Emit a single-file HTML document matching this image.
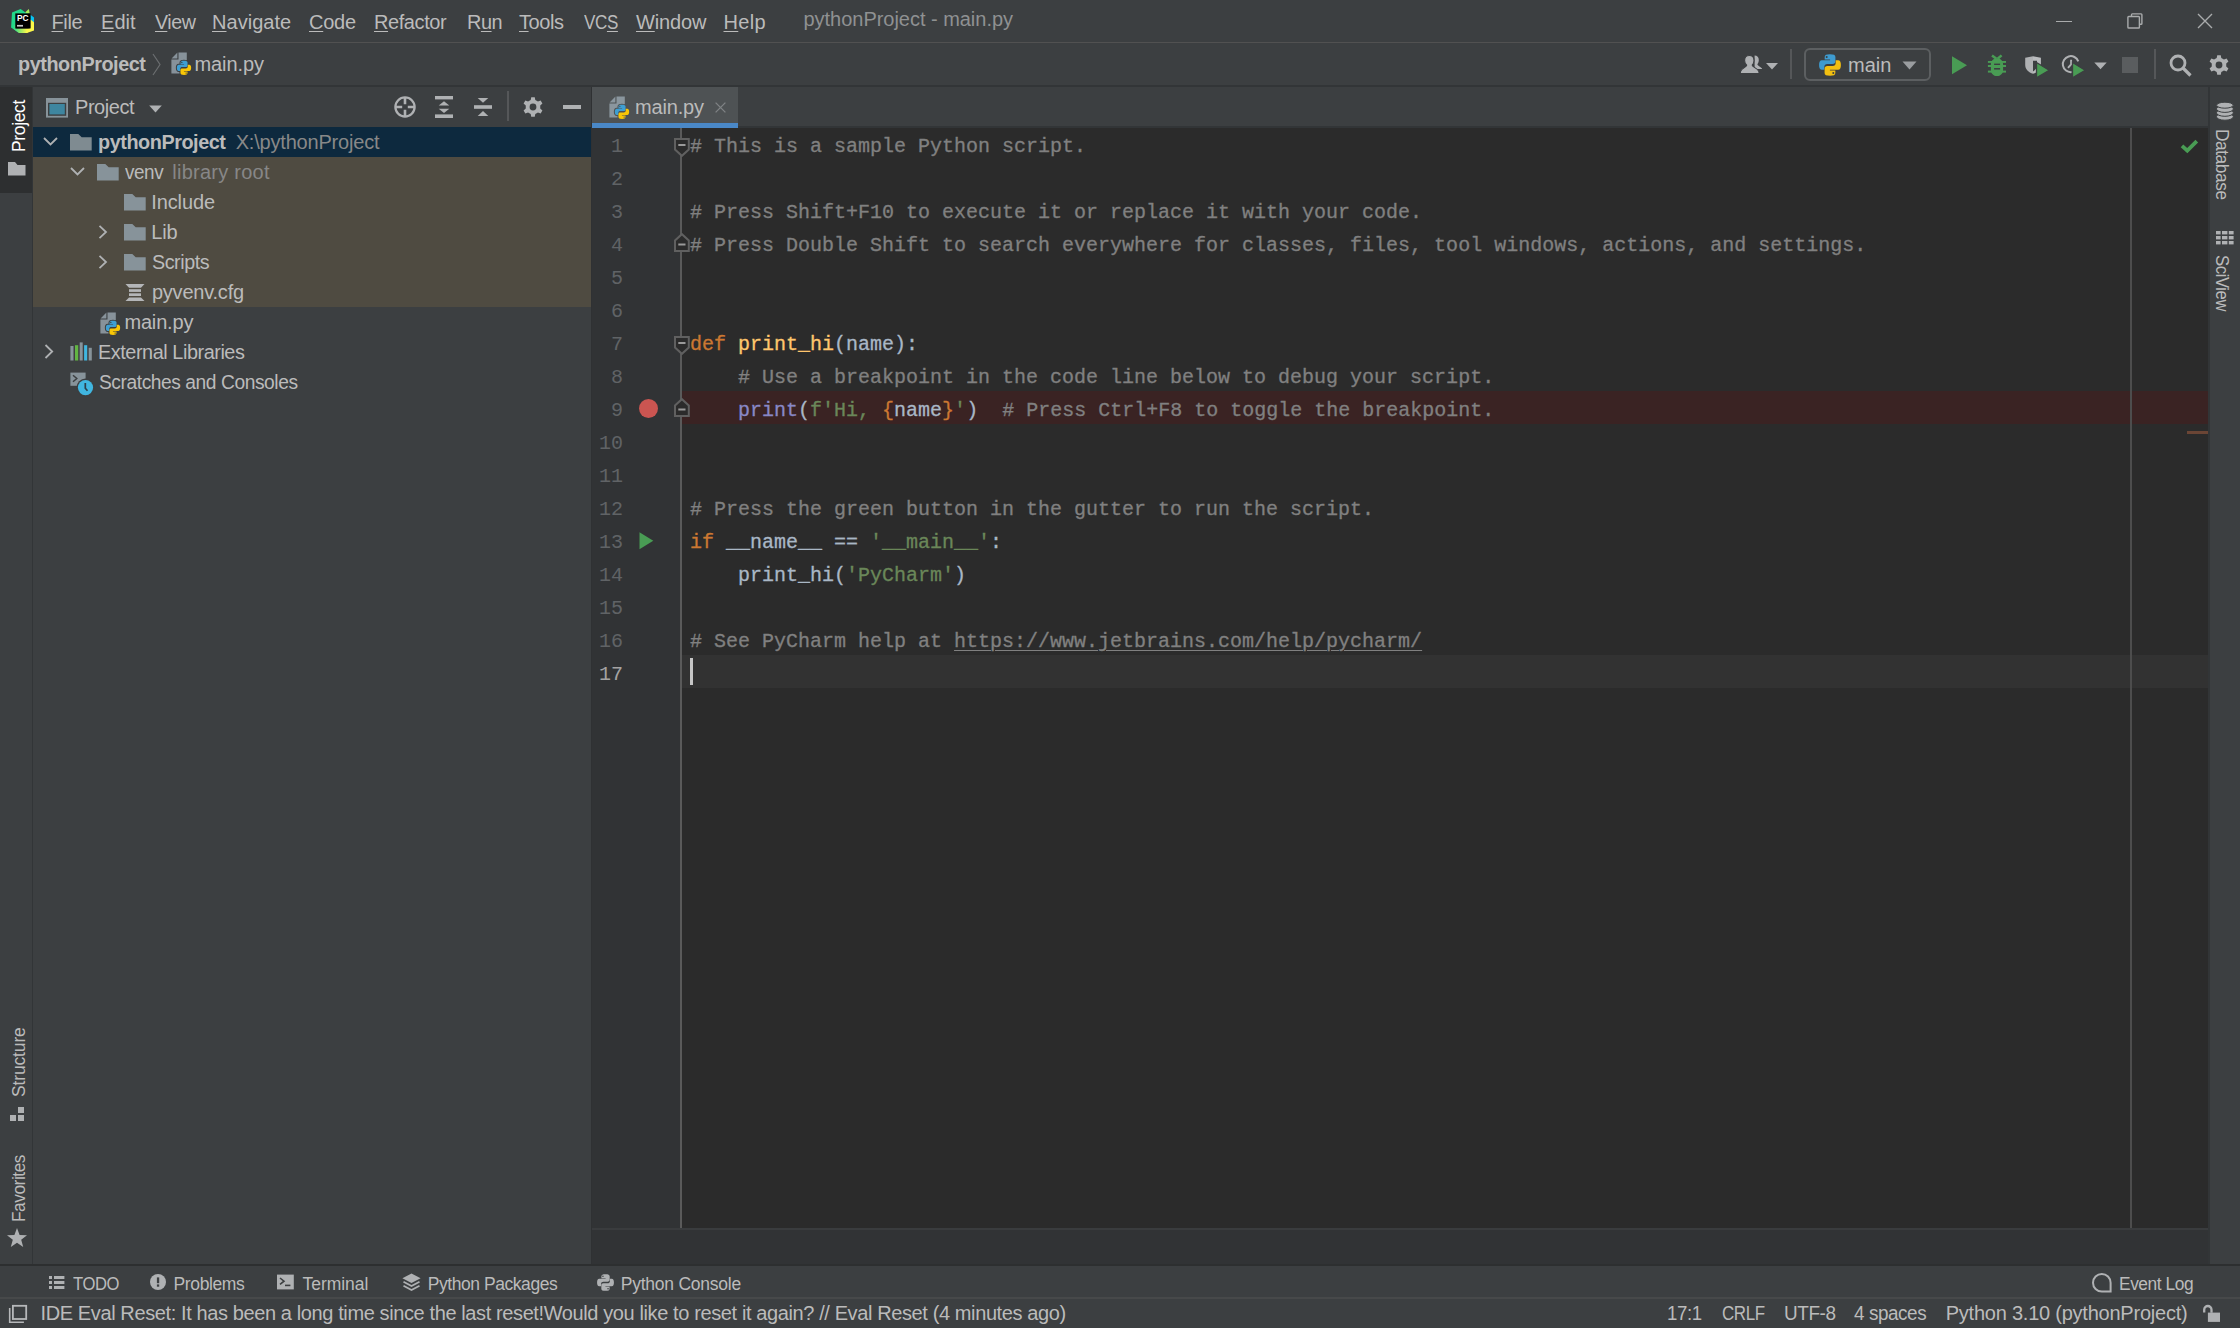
<!DOCTYPE html>
<html lang="en">
<head>
<meta charset="utf-8">
<title>pythonProject - main.py</title>
<style>
*{box-sizing:border-box;margin:0;padding:0}
html,body{width:2240px;height:1328px;overflow:hidden;background:#3c3f41}
body{position:relative;font-family:"Liberation Sans",sans-serif;font-size:20px;color:#bbbbbb;-webkit-font-smoothing:antialiased}
.a{position:absolute}
.t{position:absolute;white-space:pre;line-height:30px;height:30px}
.b{font-weight:bold}
.dim{color:#878787}
u{text-decoration:underline;text-decoration-thickness:1px;text-underline-offset:1.500px}
svg{position:absolute;overflow:visible}
/* editor */
#ed{position:absolute;left:592px;top:127px;width:1616px;height:1101px;background:#2b2b2b;overflow:hidden}
#gut{position:absolute;left:0;top:0;width:88px;height:1101px;background:#313335}
#gsep{position:absolute;left:88px;top:0;width:2px;height:1101px;background:#5a5a5a}
#margin{position:absolute;left:1538px;top:1px;width:2px;height:1100px;background:#4d4d4d}
.ln{position:absolute;left:0;width:31px;text-align:right;font-family:"Liberation Mono",monospace;font-size:20px;line-height:33px;height:33px;color:#606366;white-space:pre}
.cl{position:absolute;left:98px;font-family:"Liberation Mono",monospace;font-size:20px;line-height:33px;height:33px;color:#a9b7c6;white-space:pre;-webkit-text-stroke:.3px}
.c{color:#808080}.k{color:#cc7832}.s{color:#6a8759}.f{color:#ffc66d}.bi{color:#8888c6}
.lnk{text-decoration:underline;text-decoration-thickness:1px;text-underline-offset:3px}
/*FIT*/
#m1{left:51.50px;letter-spacing:-0.368px}
#m2{left:101.00px;letter-spacing:0.031px}
#m3{left:154.50px;letter-spacing:-0.450px;transform-origin:0 0;transform:scaleX(0.9835)}
#m4{left:212.00px;letter-spacing:0.027px}
#m5{left:309.00px;letter-spacing:-0.230px}
#m6{left:374.00px;letter-spacing:-0.418px}
#m7{left:466.50px;letter-spacing:-0.450px;transform-origin:0 0;transform:scaleX(0.9951)}
#m8{left:519.00px;letter-spacing:-0.422px}
#m9{left:584.00px;letter-spacing:-0.450px;transform-origin:0 0;transform:scaleX(0.8525)}
#m10{left:636.00px;letter-spacing:-0.138px}
#m11{left:723.50px;letter-spacing:0.330px}
#ttl{left:803.50px;letter-spacing:-0.027px}
#n1{left:17.76px;letter-spacing:-0.450px;transform-origin:0 0;transform:scaleX(0.9911)}
#n2{left:194.50px;letter-spacing:-0.088px}
#n3{left:1848.00px;letter-spacing:0.024px}
#p0{left:75.00px;letter-spacing:-0.448px}
#r0a{left:97.71px;letter-spacing:-0.450px;transform-origin:0 0;transform:scaleX(0.9915)}
#r0b{left:235.70px;letter-spacing:-0.193px}
#r1a{left:125.40px;letter-spacing:-0.450px;transform-origin:0 0;transform:scaleX(0.9439)}
#r1b{left:172.30px;letter-spacing:0.253px}
#r2{left:151.20px;letter-spacing:-0.095px}
#r3{left:151.20px;letter-spacing:-0.133px}
#r4{left:152.20px;letter-spacing:-0.450px;transform-origin:0 0;transform:scaleX(0.9859)}
#r5{left:151.90px;letter-spacing:-0.211px}
#r6{left:124.40px;letter-spacing:-0.155px}
#r7{left:97.71px;letter-spacing:-0.450px;transform-origin:0 0;transform:scaleX(0.9927)}
#r8{left:98.70px;letter-spacing:-0.450px;transform-origin:0 0;transform:scaleX(0.9598)}
#tb{left:635.00px;letter-spacing:-0.172px}
#b1{left:72.60px;letter-spacing:-0.450px;transform-origin:0 0;transform:scaleX(0.9488)}
#b2{left:173.60px;letter-spacing:-0.395px}
#b3{left:302.50px;letter-spacing:-0.034px}
#b4{left:427.80px;letter-spacing:-0.450px}
#b5{left:620.70px;letter-spacing:-0.232px}
#b6{left:2118.51px;letter-spacing:-0.450px;transform-origin:0 0;transform:scaleX(0.9921)}
#s1{left:40.50px;letter-spacing:-0.389px}
#s2{left:1667.07px;letter-spacing:-0.450px;transform-origin:0 0;transform:scaleX(0.9327)}
#s3{left:1721.65px;letter-spacing:-0.450px;transform-origin:0 0;transform:scaleX(0.8478)}
#s4{left:1783.75px;letter-spacing:-0.450px;transform-origin:0 0;transform:scaleX(0.9472)}
#s5{left:1854.00px;letter-spacing:-0.450px;transform-origin:0 0;transform:scaleX(0.9441)}
#s6{left:1945.70px;letter-spacing:-0.229px}
#v1{left:4.00px;top:152.20px;letter-spacing:-0.351px;transform-origin:0 0;transform:rotate(-90deg) scaleX(1.0000)}
#v2{left:3.80px;top:1096.80px;letter-spacing:-0.146px;transform-origin:0 0;transform:rotate(-90deg) scaleX(1.0000)}
#v3{left:3.80px;top:1221.99px;letter-spacing:-0.450px;transform-origin:0 0;transform:rotate(-90deg) scaleX(0.9865)}
#v4{left:2237.00px;top:128.71px;letter-spacing:-0.450px;transform-origin:0 0;transform:rotate(90deg) scaleX(0.9896)}
#v5{left:2237.00px;top:254.70px;letter-spacing:-0.450px;transform-origin:0 0;transform:rotate(90deg) scaleX(0.9549)}
/*ENDFIT*/
</style>
</head>
<body>
<!-- ===== frame lines ===== -->
<div class="a" style="left:0;top:42px;width:2240px;height:1px;background:#515151"></div>
<div class="a" style="left:0;top:85px;width:2240px;height:2px;background:#323537"></div>
<!-- left stripe -->
<div class="a" id="lstripe" style="left:0;top:87px;width:32px;height:1177px;background:#3c3f41"></div>
<div class="a" style="left:32px;top:87px;width:1px;height:1177px;background:#323537"></div>
<div class="a" id="projbtn" style="left:0;top:87px;width:32px;height:106px;background:#2d2f30"></div>
<!-- right stripe -->
<div class="a" style="left:2208px;top:87px;width:2px;height:1177px;background:#323537"></div>
<!-- sidebar / editor splitter -->
<div class="a" style="left:591px;top:87px;width:1px;height:1177px;background:#2f3133"></div>
<!-- bottom lines -->
<div class="a" style="left:0;top:1264px;width:2240px;height:2px;background:#2d2f30"></div>
<div class="a" style="left:0;top:1297px;width:2240px;height:2px;background:#47494a"></div>

<!-- ===== menu bar ===== -->
<svg id="logo" style="left:0;top:0" width="40" height="40" viewBox="0 0 40 40">
  <linearGradient id="lg1" x1="13" y1="0" x2="27" y2="0" gradientUnits="userSpaceOnUse"><stop offset="0" stop-color="#21d789"/><stop offset="1" stop-color="#fcf84a"/></linearGradient>
  <polygon points="12,12.600 20.600,9 25.200,12.200 28,13.400 28,28 16,28 18.900,33 11.100,27.200" fill="#21d789"/>
  <polygon points="25.200,12.200 28.900,8.900 29.700,13.400 27,13.400" fill="#a6ee5a"/>
  <polygon points="30.400,14.800 34,17.500 34,22.400 30.400,20.600" fill="#07c3f2"/>
  <polygon points="30.400,19.400 34,22.300 34,30.600 26.900,33 22,32 30.400,27.800" fill="#fcf84a"/>
  <polygon points="11.100,27.200 15.400,24 15.400,28.400 30.400,28.400 30.400,30 26.900,33 18.900,33" fill="url(#lg1)"/>
  <rect x="15.300" y="13.400" width="15.200" height="15.100" fill="#000"/>
  <rect x="17" y="24.900" width="6" height="1.700" fill="#c8c8c8"/>
  <text x="16.900" y="21.400" font-family="Liberation Sans, sans-serif" font-weight="bold" font-size="9.600" fill="#fff" textLength="11.600" lengthAdjust="spacingAndGlyphs">PC</text>
</svg>
<span class="t" id="m1" style="top:7px"><u>F</u>ile</span>
<span class="t" id="m2" style="top:7px"><u>E</u>dit</span>
<span class="t" id="m3" style="top:7px"><u>V</u>iew</span>
<span class="t" id="m4" style="top:7px"><u>N</u>avigate</span>
<span class="t" id="m5" style="top:7px"><u>C</u>ode</span>
<span class="t" id="m6" style="top:7px"><u>R</u>efactor</span>
<span class="t" id="m7" style="top:7px">R<u>u</u>n</span>
<span class="t" id="m8" style="top:7px"><u>T</u>ools</span>
<span class="t" id="m9" style="top:7px">VC<u>S</u></span>
<span class="t" id="m10" style="top:7px"><u>W</u>indow</span>
<span class="t" id="m11" style="top:7px"><u>H</u>elp</span>
<span class="t" id="ttl" style="top:4px;color:#8f9192">pythonProject - main.py</span>
<!-- window controls -->
<div class="a" style="left:2056px;top:20.700px;width:16px;height:1.600px;background:#a9abac"></div>
<svg style="left:2127px;top:13px" width="16" height="16" viewBox="0 0 16 16" fill="none" stroke="#a9abac" stroke-width="1.400">
  <rect x=".9" y="3.500" width="11.500" height="11.500" rx=".8"/>
  <path d="M4.500 3.500V1.700a.8.800 0 0 1 .8-.800h8.800a.8.800 0 0 1 .8.800v8.800a.8.800 0 0 1-.8.800h-1.700"/>
</svg>
<svg style="left:2197px;top:13px" width="16" height="16" viewBox="0 0 16 16" fill="none" stroke="#a9abac" stroke-width="1.400">
  <path d="M1 1L15 15M15 1L1 15"/>
</svg>

<!-- ===== navigation bar ===== -->
<span class="t b" id="n1" style="top:49px">pythonProject</span>
<svg style="left:152px;top:53px" width="10" height="23" viewBox="0 0 10 23" fill="none" stroke="#6b6e70" stroke-width="1.2"><path d="M1 1L8 11.5L1 22"/></svg>
<!-- python file icon -->
<svg style="left:171px;top:52px" width="21" height="24" viewBox="0 0 21 24">
  <path d="M7.500 .4H15.800V21.400H.4V7.500H7.500Z" fill="#9aa7b0" fill-opacity=".8"/><path d="M6.400 .6V6.400H.6Z" fill="#9aa7b0" fill-opacity=".8"/>
  <g transform="translate(5.800 8.600) scale(.6)">
    <path d="M11.9 .2C8 .2 6.2 1 6.2 3.2V6h5.9v.8H3.2C1 6.8.1 9 .1 12s.9 5.2 3.1 5.2h2.6v-3.1c0-2.200 1.200-3.300 3.300-3.300h5.800c1.900 0 3-1.100 3-3V3.200c0-2.200-1.800-3-6-3z" fill="#3c3f41" stroke="#3c3f41" stroke-width="3.400"/><path transform="rotate(180 12 12)" d="M11.9 .2C8 .2 6.2 1 6.2 3.2V6h5.9v.8H3.2C1 6.8.1 9 .1 12s.9 5.2 3.1 5.2h2.6v-3.1c0-2.200 1.200-3.300 3.300-3.300h5.800c1.900 0 3-1.100 3-3V3.200c0-2.200-1.800-3-6-3z" fill="#3c3f41" stroke="#3c3f41" stroke-width="3.400"/>
    <path d="M11.9 .2C8 .2 6.2 1 6.2 3.2V6h5.9v.8H3.2C1 6.8.1 9 .1 12s.9 5.2 3.1 5.2h2.6v-3.1c0-2.200 1.200-3.300 3.300-3.300h5.800c1.900 0 3-1.100 3-3V3.200c0-2.200-1.800-3-6-3zM8.400 2.100a1.100 1.100 0 1 1 0 2.200 1.100 1.100 0 0 1 0-2.200z" fill="#3e9fd3" fill-rule="evenodd"/><path transform="rotate(180 12 12)" d="M11.9 .2C8 .2 6.2 1 6.2 3.2V6h5.9v.8H3.2C1 6.8.1 9 .1 12s.9 5.2 3.1 5.2h2.6v-3.1c0-2.200 1.200-3.300 3.300-3.300h5.800c1.900 0 3-1.100 3-3V3.200c0-2.200-1.800-3-6-3zM8.400 2.100a1.100 1.100 0 1 1 0 2.200 1.100 1.100 0 0 1 0-2.200z" fill="#f8c606" fill-rule="evenodd"/>
  </g>
</svg>
<span class="t" id="n2" style="top:49px">main.py</span>
<!-- users icon -->
<svg style="left:1740px;top:55px" width="40" height="20" viewBox="0 0 40 20">
  <path d="M14.600 .600c2.600 0 4.200 1.800 4.200 4.400 0 1.800-.700 3.300-1.500 4.200.300 1.400 3 2.400 4.700 4.400v.4h-7.400z" fill="#afb1b3"/>
  <path d="M9.300 .500c2.900 0 4.700 2 4.700 4.900 0 2-.800 3.700-1.800 4.800.200 2.100 5.400 2.800 6.600 6.200l.400 2.200H.2l.4-2.200C1.800 13 6.400 12.300 6.700 10.200 5.600 9.100 4.600 7.400 4.600 5.400 4.600 2.500 6.400.500 9.300.500z" fill="#afb1b3" stroke="#3c3f41" stroke-width="1.100"/>
  <path d="M26 8h12l-6 6.500z" fill="#afb1b3"/>
</svg>
<div class="a" style="left:1790px;top:49px;width:2px;height:30px;background:#555759"></div>
<!-- run configuration box -->
<div class="a" style="left:1804px;top:48px;width:127px;height:33px;border:2px solid #5c5f61;border-radius:6px"></div>
<svg style="left:1819px;top:54px" width="22" height="22" viewBox="0 0 24 24">
  <path d="M11.9 .2C8 .2 6.2 1 6.2 3.2V6h5.9v.8H3.2C1 6.8.1 9 .1 12s.9 5.2 3.1 5.2h2.600v-3.100c0-2.200 1.200-3.300 3.300-3.300h5.800c1.900 0 3-1.100 3-3V3.200c0-2.200-1.800-3-6-3zM8.400 2.100a1.100 1.100 0 1 1 0 2.200 1.100 1.100 0 0 1 0-2.200z" fill="#3e9bd0"/>
  <path transform="rotate(180 12 12)" d="M11.9 .2C8 .2 6.2 1 6.2 3.2V6h5.900v.8H3.200C1 6.800.1 9 .1 12s.9 5.200 3.100 5.200h2.600v-3.100c0-2.200 1.200-3.300 3.300-3.300h5.800c1.900 0 3-1.100 3-3V3.200c0-2.200-1.800-3-6-3zM8.400 2.100a1.100 1.100 0 1 1 0 2.200 1.100 1.100 0 0 1 0-2.200z" fill="#f2bf10"/>
</svg>
<span class="t" id="n3" style="top:50px">main</span>
<svg style="left:1902px;top:61px" width="15" height="9" viewBox="0 0 15 9"><path d="M.5 .5h14L7.500 8.500z" fill="#9a9da0"/></svg>
<!-- run -->
<svg style="left:1951px;top:56px" width="17" height="19" viewBox="0 0 17 19"><path d="M1 .3L16 9.300L1 18.300z" fill="#499c54"/></svg>
<!-- debug bug -->
<svg style="left:1987px;top:54px" width="20" height="23" viewBox="0 0 20 23" fill="#499c54">
  <path d="M5 1.400L9.400 4.800M14.600 1.400L10.600 4.800" stroke="#499c54" stroke-width="2.500" fill="none"/>
  <path d="M10 4.300c3.500 0 6.100 2.600 6.100 6.100v5.500c0 3.500-2.600 6.100-6.100 6.100s-6.100-2.600-6.100-6.100v-5.500c0-3.500 2.600-6.100 6.100-6.100z"/>
  <rect x=".9" y="7" width="18.100" height="1.900"/><rect x=".9" y="11" width="18.100" height="2"/><rect x=".9" y="16.600" width="18.100" height="2"/>
  <rect x="7.100" y="9.600" width="6" height="1.400" fill="#3c3f41"/><rect x="7.100" y="14" width="6" height="1.600" fill="#3c3f41"/>
</svg>
<!-- coverage -->
<svg style="left:2024px;top:55px" width="25" height="23" viewBox="0 0 25 23">
  <path d="M9 1.200L1.200 2.800V10C1.200 14.500 4.500 17.300 9 18.800Z" fill="#afb1b3"/>
  <path fill-rule="evenodd" d="M9 1.200L16.900 2.800V10C16.900 14.500 13.500 17.300 9 18.800ZM9 5.800H13V10C13 13 11.500 15 9 16.400Z" fill="#b9bbbd"/>
  <path d="M12.500 7.500L25.200 15.200L12.500 22.900z" fill="#499c54" stroke="#3c3f41" stroke-width="1.300"/>
</svg>
<!-- profile -->
<svg style="left:2060px;top:55px" width="25" height="23" viewBox="0 0 25 23">
  <path d="M18.300 6.300A8 8 0 1 0 11.600 17.100" fill="none" stroke="#afb1b3" stroke-width="2"/>
  <path d="M11.100 4.800v4.600l-3.100 3.400" fill="none" stroke="#afb1b3" stroke-width="1.900"/>
  <path d="M12.500 7.500L25.200 15.200L12.500 22.900z" fill="#499c54" stroke="#3c3f41" stroke-width="1.300"/>
</svg>
<svg style="left:2094px;top:62px" width="13" height="8" viewBox="0 0 13 8"><path d="M.3 .6h12.400L6.500 7.300z" fill="#afb1b3"/></svg>
<div class="a" style="left:2122px;top:57px;width:16px;height:16px;background:#5a5d5f"></div>
<div class="a" style="left:2154px;top:49px;width:2px;height:30px;background:#555759"></div>
<!-- search -->
<svg style="left:2169px;top:54px" width="23" height="23" viewBox="0 0 23 23" fill="none" stroke="#afb1b3"><circle cx="9" cy="9" r="7" stroke-width="2.800"/><path d="M14 14l7.500 7.500" stroke-width="3.200"/></svg>
<!-- settings gear -->
<svg style="left:2209px;top:55px" width="20" height="20" viewBox="-10 -10 20 20"><path fill-rule="evenodd" fill="#afb1b3" d="M-2.29 -7.04 L-1.77 -9.84 L1.77 -9.84 L2.29 -7.04 L4.95 -5.50 L7.64 -6.45 L9.41 -3.39 L7.24 -1.54 L7.24 1.54 L9.41 3.39 L7.64 6.45 L4.95 5.50 L2.29 7.04 L1.77 9.84 L-1.77 9.84 L-2.29 7.04 L-4.95 5.50 L-7.64 6.45 L-9.41 3.39 L-7.24 1.54 L-7.24 -1.54 L-9.41 -3.39 L-7.64 -6.45 L-4.95 -5.50Z M3.40 0 A3.40 3.40 0 1 0 -3.40 0 A3.40 3.40 0 1 0 3.40 0Z"/></svg>

<!-- ===== left stripe contents ===== -->
<span class="t" id="v1" style="color:#ffffff;font-size:17.500px">Project</span>
<svg style="left:8px;top:162px" width="18" height="14" viewBox="0 0 18 14"><path d="M0 0H7L9.500 3H17.500V13.500H0Z" fill="#afb1b3"/></svg>
<span class="t" id="v2" style="font-size:17.500px">Structure</span>
<svg style="left:10px;top:1107px" width="14" height="14" viewBox="0 0 14 14" fill="#afb1b3"><rect x="8" y="0" width="6" height="6"/><rect x="0" y="8" width="6" height="6"/><rect x="8" y="8" width="6" height="6"/></svg>
<span class="t" id="v3" style="font-size:17.500px">Favorites</span>
<svg style="left:7px;top:1228px" width="20" height="19" viewBox="0 0 20 19"><path d="M10 0l2.600 6.900 7.400.300-5.800 4.600 2 7.100L10 14.800 3.800 18.900l2-7.100L0 7.200l7.400-.300z" fill="#afb1b3"/></svg>

<!-- ===== project tool window ===== -->
<svg style="left:46px;top:98px" width="22" height="20" viewBox="0 0 22 20"><rect width="22" height="19.600" fill="#87939a"/><rect x="2" y="4.800" width="18.200" height="13" fill="#3c3f41"/><rect x="3.400" y="6" width="15.400" height="10.400" fill="#3e86a0"/></svg>
<span class="t" id="p0" style="top:92px">Project</span>
<svg style="left:149px;top:105px" width="13" height="8" viewBox="0 0 13 8"><path d="M.2 .4h12.600L6.500 7.600z" fill="#afb1b3"/></svg>
<!-- header actions -->
<svg style="left:394px;top:96px" width="22" height="22" viewBox="0 0 22 22" fill="none" stroke="#afb1b3"><circle cx="11" cy="11" r="9.600" stroke-width="2.300"/><path d="M11 1v7.200M11 13.800v7.200M1 11h7.200M13.800 11h7.200" stroke-width="2.600"/></svg>
<svg style="left:435px;top:96px" width="18" height="22" viewBox="0 0 18 22" fill="#afb1b3"><rect x="0" y="0" width="18" height="3.400"/><rect x="0" y="18.400" width="18" height="3.600"/><path d="M9 5.200L14.300 9.500H3.700Z"/><path d="M9 17L14.300 12.800H3.700Z"/></svg>
<svg style="left:474px;top:96px" width="18" height="22" viewBox="0 0 18 22" fill="#afb1b3"><rect x="0" y="9.200" width="18" height="3.600"/><path d="M9 6.800L14.300 2H3.700Z"/><path d="M9 15L14.300 20H3.700Z"/></svg>
<div class="a" style="left:507px;top:91px;width:2px;height:30px;background:#555759"></div>
<svg style="left:523px;top:97px" width="20" height="20" viewBox="-10 -10 20 20"><path fill-rule="evenodd" fill="#afb1b3" d="M-2.29 -7.04 L-1.77 -9.84 L1.77 -9.84 L2.29 -7.04 L4.95 -5.50 L7.64 -6.45 L9.41 -3.39 L7.24 -1.54 L7.24 1.54 L9.41 3.39 L7.64 6.45 L4.95 5.50 L2.29 7.04 L1.77 9.84 L-1.77 9.84 L-2.29 7.04 L-4.95 5.50 L-7.64 6.45 L-9.41 3.39 L-7.24 1.54 L-7.24 -1.54 L-9.41 -3.39 L-7.64 -6.45 L-4.95 -5.50Z M3.40 0 A3.40 3.40 0 1 0 -3.40 0 A3.40 3.40 0 1 0 3.40 0Z"/></svg>
<div class="a" style="left:563px;top:105px;width:18px;height:4px;background:#afb1b3"></div>

<!-- tree rows -->
<div class="a" style="left:33px;top:127px;width:558px;height:30px;background:#0d293e"></div>
<div class="a" style="left:33px;top:157px;width:558px;height:150px;background:#4f4b41"></div>
<!-- row 0 -->
<svg style="left:43px;top:137px" width="15" height="9" viewBox="0 0 15 9" fill="none" stroke="#afb1b3" stroke-width="1.800"><path d="M1 1L7.500 7.500L14 1"/></svg>
<svg style="left:70px;top:134px" width="22" height="17" viewBox="0 0 22 17"><path d="M0 0H8.300L11.700 3.300H21.700V16.500H0Z" fill="#7f8b91"/></svg>
<span class="t b" id="r0a" style="top:127px">pythonProject</span>
<span class="t" id="r0b" style="top:127px;color:#888888">X:\pythonProject</span>
<!-- row 1 -->
<svg style="left:70px;top:167px" width="15" height="9" viewBox="0 0 15 9" fill="none" stroke="#afb1b3" stroke-width="1.800"><path d="M1 1L7.500 7.500L14 1"/></svg>
<svg style="left:97px;top:164px" width="22" height="17" viewBox="0 0 22 17"><path d="M0 0H8.300L11.700 3.300H21.700V16.500H0Z" fill="#87939a"/></svg>
<span class="t" id="r1a" style="top:157px">venv</span>
<span class="t dim" id="r1b" style="top:157px">library root</span>
<!-- row 2 -->
<svg style="left:124px;top:194px" width="22" height="17" viewBox="0 0 22 17"><path d="M0 0H8.300L11.700 3.300H21.700V16.500H0Z" fill="#87939a"/></svg>
<span class="t" id="r2" style="top:187px">Include</span>
<!-- row 3 -->
<svg style="left:98px;top:225px" width="10" height="14" viewBox="0 0 10 14" fill="none" stroke="#afb1b3" stroke-width="1.800"><path d="M1.500 .8L8 7L1.500 13.200"/></svg>
<svg style="left:124px;top:224px" width="22" height="17" viewBox="0 0 22 17"><path d="M0 0H8.300L11.700 3.300H21.700V16.500H0Z" fill="#87939a"/></svg>
<span class="t" id="r3" style="top:217px">Lib</span>
<!-- row 4 -->
<svg style="left:98px;top:255px" width="10" height="14" viewBox="0 0 10 14" fill="none" stroke="#afb1b3" stroke-width="1.800"><path d="M1.500 .8L8 7L1.500 13.200"/></svg>
<svg style="left:124px;top:254px" width="22" height="17" viewBox="0 0 22 17"><path d="M0 0H8.300L11.700 3.300H21.700V16.500H0Z" fill="#87939a"/></svg>
<span class="t" id="r4" style="top:247px">Scripts</span>
<!-- row 5 -->
<svg style="left:125px;top:284px" width="20" height="17" viewBox="0 0 20 17" fill="#b4b6b8"><path d="M.5 0H19.500L16 3.800H4Z"/><rect x="4" y="5.200" width="12" height="2.700"/><rect x="4" y="9.300" width="12" height="2.700"/><path d="M4 13.400H16L19.500 17H.5Z"/></svg>
<span class="t" id="r5" style="top:277px">pyvenv.cfg</span>
<!-- row 6 -->
<svg style="left:100px;top:312px" width="21" height="24" viewBox="0 0 21 24">
  <path d="M7.500 .4H15.800V21.400H.4V7.500H7.500Z" fill="#9aa7b0" fill-opacity=".8"/><path d="M6.400 .6V6.400H.6Z" fill="#9aa7b0" fill-opacity=".8"/>
  <g transform="translate(5.800 8.600) scale(.6)">
    <path d="M11.9 .2C8 .2 6.2 1 6.2 3.2V6h5.9v.8H3.2C1 6.8.1 9 .1 12s.9 5.2 3.1 5.2h2.6v-3.1c0-2.200 1.200-3.300 3.300-3.300h5.800c1.900 0 3-1.100 3-3V3.200c0-2.200-1.800-3-6-3z" fill="#3c3f41" stroke="#3c3f41" stroke-width="3.400"/><path transform="rotate(180 12 12)" d="M11.9 .2C8 .2 6.2 1 6.2 3.2V6h5.9v.8H3.2C1 6.8.1 9 .1 12s.9 5.2 3.1 5.2h2.6v-3.1c0-2.200 1.200-3.300 3.300-3.300h5.800c1.900 0 3-1.100 3-3V3.200c0-2.200-1.800-3-6-3z" fill="#3c3f41" stroke="#3c3f41" stroke-width="3.400"/>
    <path d="M11.9 .2C8 .2 6.2 1 6.2 3.2V6h5.9v.8H3.2C1 6.8.1 9 .1 12s.9 5.2 3.1 5.2h2.6v-3.1c0-2.200 1.200-3.300 3.300-3.300h5.800c1.900 0 3-1.100 3-3V3.200c0-2.200-1.800-3-6-3zM8.400 2.100a1.100 1.100 0 1 1 0 2.200 1.100 1.100 0 0 1 0-2.200z" fill="#3e9fd3" fill-rule="evenodd"/><path transform="rotate(180 12 12)" d="M11.9 .2C8 .2 6.2 1 6.2 3.2V6h5.9v.8H3.2C1 6.8.1 9 .1 12s.9 5.2 3.1 5.2h2.6v-3.1c0-2.200 1.200-3.300 3.300-3.300h5.800c1.900 0 3-1.100 3-3V3.200c0-2.200-1.800-3-6-3zM8.400 2.100a1.100 1.100 0 1 1 0 2.200 1.100 1.100 0 0 1 0-2.200z" fill="#f8c606" fill-rule="evenodd"/>
  </g>
</svg>
<span class="t" id="r6" style="top:307px">main.py</span>
<!-- row 7 -->
<svg style="left:44px;top:344px" width="10" height="15" viewBox="0 0 10 15" fill="none" stroke="#afb1b3" stroke-width="1.800"><path d="M1.500 1L8.200 7.500L1.500 14"/></svg>
<svg style="left:70px;top:342px" width="22" height="19" viewBox="0 0 22 19"><rect x=".4" y="4" width="3.100" height="14.500" fill="#87939a"/><rect x="5" y="3.200" width="3.200" height="15.300" fill="#62b543"/><rect x="9.700" y=".4" width="3" height="18.100" fill="#87939a"/><rect x="14.100" y="3.200" width="3.100" height="15.300" fill="#40b6e0"/><rect x="18.700" y="5.800" width="3.100" height="12.700" fill="#87939a"/></svg>
<span class="t" id="r7" style="top:337px">External Libraries</span>
<!-- row 8 -->
<svg style="left:70px;top:372px" width="24" height="24" viewBox="0 0 24 24">
  <rect x=".4" y=".6" width="15.200" height="13.200" fill="#87939a"/>
  <path d="M3 3.200L6.800 6.500L3 9.800" fill="none" stroke="#3c3f41" stroke-width="1.500"/>
  <circle cx="15.500" cy="15.600" r="9" fill="#3c3f41"/>
  <circle cx="15.500" cy="15.600" r="7.600" fill="#40b6e0"/>
  <path d="M15.300 11v5.200l2.200 2.500" fill="none" stroke="#2d3e4a" stroke-width="1.700"/>
</svg>
<span class="t" id="r8" style="top:367px">Scratches and Consoles</span>

<!-- ===== editor tabs ===== -->
<div class="a" style="left:592px;top:87px;width:146px;height:41px;background:#4e5254"></div>
<svg style="left:609px;top:96px" width="21" height="24" viewBox="0 0 21 24">
  <path d="M7.500 .4H15.800V21.400H.4V7.500H7.500Z" fill="#9aa7b0" fill-opacity=".8"/><path d="M6.400 .6V6.400H.6Z" fill="#9aa7b0" fill-opacity=".8"/>
  <g transform="translate(5.800 8.600) scale(.6)">
    <path d="M11.9 .2C8 .2 6.2 1 6.2 3.2V6h5.9v.8H3.2C1 6.8.1 9 .1 12s.9 5.2 3.1 5.2h2.6v-3.1c0-2.200 1.200-3.300 3.300-3.300h5.800c1.900 0 3-1.100 3-3V3.200c0-2.200-1.800-3-6-3z" fill="#4e5254" stroke="#4e5254" stroke-width="3.400"/><path transform="rotate(180 12 12)" d="M11.9 .2C8 .2 6.2 1 6.2 3.2V6h5.9v.8H3.2C1 6.8.1 9 .1 12s.9 5.2 3.1 5.2h2.6v-3.1c0-2.200 1.200-3.300 3.300-3.300h5.800c1.900 0 3-1.100 3-3V3.200c0-2.200-1.800-3-6-3z" fill="#4e5254" stroke="#4e5254" stroke-width="3.400"/>
    <path d="M11.9 .2C8 .2 6.2 1 6.2 3.2V6h5.9v.8H3.2C1 6.8.1 9 .1 12s.9 5.2 3.1 5.2h2.6v-3.1c0-2.200 1.200-3.300 3.300-3.300h5.800c1.900 0 3-1.100 3-3V3.200c0-2.200-1.800-3-6-3zM8.400 2.100a1.100 1.100 0 1 1 0 2.200 1.100 1.100 0 0 1 0-2.200z" fill="#3e9fd3" fill-rule="evenodd"/><path transform="rotate(180 12 12)" d="M11.9 .2C8 .2 6.2 1 6.2 3.2V6h5.9v.8H3.2C1 6.8.1 9 .1 12s.9 5.2 3.1 5.2h2.6v-3.1c0-2.200 1.200-3.300 3.300-3.300h5.800c1.900 0 3-1.100 3-3V3.200c0-2.200-1.800-3-6-3zM8.400 2.100a1.100 1.100 0 1 1 0 2.200 1.100 1.100 0 0 1 0-2.200z" fill="#f8c606" fill-rule="evenodd"/>
  </g>
</svg>
<span class="t" id="tb" style="top:92px">main.py</span>
<svg style="left:715px;top:102px" width="11" height="11" viewBox="0 0 11 11" fill="none" stroke="#7f8385" stroke-width="1.300"><path d="M.6 .6L10.400 10.400M10.400 .6L.6 10.400"/></svg>
<!-- ===== editor ===== -->
<div id="ed">
<div id="gut"></div>
<div class="a" style="left:90px;top:264px;width:1526px;height:33px;background:#3a2323"></div>
<div class="a" style="left:90px;top:528px;width:1526px;height:33px;background:#323232"></div>
<div id="gsep"></div>
<div id="margin"></div>
<span class="ln" style="top:3px">1</span>
<span class="ln" style="top:36px">2</span>
<span class="ln" style="top:69px">3</span>
<span class="ln" style="top:102px">4</span>
<span class="ln" style="top:135px">5</span>
<span class="ln" style="top:168px">6</span>
<span class="ln" style="top:201px">7</span>
<span class="ln" style="top:234px">8</span>
<span class="ln" style="top:267px">9</span>
<span class="ln" style="top:300px">10</span>
<span class="ln" style="top:333px">11</span>
<span class="ln" style="top:366px">12</span>
<span class="ln" style="top:399px">13</span>
<span class="ln" style="top:432px">14</span>
<span class="ln" style="top:465px">15</span>
<span class="ln" style="top:498px">16</span>
<span class="ln" style="top:531px;color:#a4a3a3">17</span>
<span class="cl" style="top:3px"><span class="c"># This is a sample Python script.</span></span>
<span class="cl" style="top:69px"><span class="c"># Press Shift+F10 to execute it or replace it with your code.</span></span>
<span class="cl" style="top:102px"><span class="c"># Press Double Shift to search everywhere for classes, files, tool windows, actions, and settings.</span></span>
<span class="cl" style="top:201px"><span class="k">def </span><span class="f">print_hi</span>(name):</span>
<span class="cl" style="top:234px"><span class="c">    # Use a breakpoint in the code line below to debug your script.</span></span>
<span class="cl" style="top:267px">    <span class="bi">print</span>(<span class="s">f'Hi, </span><span class="k">{</span>name<span class="k">}</span><span class="s">'</span>)  <span class="c"># Press Ctrl+F8 to toggle the breakpoint.</span></span>
<span class="cl" style="top:366px"><span class="c"># Press the green button in the gutter to run the script.</span></span>
<span class="cl" style="top:399px"><span class="k">if </span>__name__ == <span class="s">'__main__'</span>:</span>
<span class="cl" style="top:432px">    print_hi(<span class="s">'PyCharm'</span>)</span>
<span class="cl" style="top:498px"><span class="c"># See PyCharm help at </span><span class="c lnk">https://www.jetbrains.com/help/pycharm/</span></span>
<div class="a" style="left:98px;top:531px;width:3px;height:27px;background:#c6c6c6"></div>
<div class="a" style="left:46.800px;top:271.600px;width:19.400px;height:19.400px;border-radius:50%;background:#cb5551"></div>
<svg style="left:47px;top:405px" width="15" height="18" viewBox="0 0 15 18"><path d="M.5 .3L14.300 8.800L.5 17.300z" fill="#499c54"/></svg>
<svg style="left:82px;top:11px" width="16" height="19" viewBox="0 0 16 19"><path d="M1 1H14.800V11.500L7.900 17.800L1 11.500Z" fill="#2b2b2b" stroke="#606060" stroke-width="2"/><path d="M4.300 7H11.500" stroke="#9a9a9a" stroke-width="2"/></svg>
<svg style="left:82px;top:106px" width="16" height="19" viewBox="0 0 16 19"><path d="M1 18H14.800V7.500L7.900 1.200L1 7.500Z" fill="#2b2b2b" stroke="#606060" stroke-width="2"/><path d="M4.300 11.500H11.500" stroke="#9a9a9a" stroke-width="2"/></svg>
<svg style="left:82px;top:209px" width="16" height="19" viewBox="0 0 16 19"><path d="M1 1H14.800V11.500L7.900 17.800L1 11.500Z" fill="#2b2b2b" stroke="#606060" stroke-width="2"/><path d="M4.300 7H11.500" stroke="#9a9a9a" stroke-width="2"/></svg>
<svg style="left:82px;top:271px" width="16" height="19" viewBox="0 0 16 19"><path d="M1 18H14.800V7.500L7.900 1.200L1 7.500Z" fill="#2b2b2b" stroke="#606060" stroke-width="2"/><path d="M4.300 11.500H11.500" stroke="#9a9a9a" stroke-width="2"/></svg>
<svg style="left:1587.500px;top:12px" width="19" height="15" viewBox="0 0 19 15" fill="none" stroke="#499c54" stroke-width="3.800"><path d="M2 6.800L7.300 11.600L16.800 2.200"/></svg>
<div class="a" style="left:1595px;top:304px;width:21px;height:3px;background:#6b4535"></div>
</div>
<div class="a" style="left:738px;top:126px;width:1470px;height:2px;background:#323537"></div>
<div class="a" style="left:592px;top:123px;width:146px;height:5px;background:#4a88c7"></div>
<div class="a" style="left:592px;top:1228px;width:1616px;height:36px;background:#313335;border-top:2px solid #3a3c3e"></div>
<!-- ===== right stripe ===== -->
<svg style="left:2216px;top:102px" width="18" height="19" viewBox="0 0 18 19" fill="#afb1b3" stroke="#3c3f41" stroke-width="1">
  <ellipse cx="8.900" cy="14.700" rx="8.500" ry="3.500"/><ellipse cx="8.900" cy="10.800" rx="8.500" ry="3.500"/><ellipse cx="8.900" cy="6.900" rx="8.500" ry="3.500"/><ellipse cx="8.900" cy="3.200" rx="8.300" ry="3"/>
</svg>
<span class="t" id="v4" style="font-size:17.500px">Database</span>
<svg style="left:2216px;top:231px" width="18" height="14" viewBox="0 0 18 14" fill="#afb1b3">
  <rect x="0" y="0" width="4.600" height="3.400"/><rect x="6" y="0" width="5.400" height="3.400"/><rect x="12.800" y="0" width="4.800" height="3.400"/>
  <rect x="0" y="5" width="4.600" height="3.400"/><rect x="6" y="5" width="5.400" height="3.400"/><rect x="12.800" y="5" width="4.800" height="3.400"/>
  <rect x="0" y="10" width="4.600" height="3.400"/><rect x="6" y="10" width="5.400" height="3.400"/><rect x="12.800" y="10" width="4.800" height="3.400"/>
</svg>
<span class="t" id="v5" style="font-size:17.500px">SciView</span>

<!-- ===== bottom tool stripe ===== -->
<svg style="left:49px;top:1276px" width="16" height="13" viewBox="0 0 16 13" fill="#afb1b3"><rect x="0" y="0" width="3" height="3"/><rect x="5" y="0" width="10.400" height="3"/><rect x="0" y="5" width="3" height="3"/><rect x="5" y="5" width="10.400" height="3"/><rect x="0" y="10" width="3" height="3"/><rect x="5" y="10" width="10.400" height="3"/></svg>
<span class="t" id="b1" style="top:1269px;font-size:17.500px">TODO</span>
<svg style="left:150px;top:1274px" width="16" height="16" viewBox="0 0 16 16"><circle cx="8" cy="8" r="8" fill="#afb1b3"/><rect x="6.900" y="3.400" width="2.300" height="5.800" fill="#3c3f41"/><rect x="6.900" y="10.400" width="2.300" height="2.300" fill="#3c3f41"/></svg>
<span class="t" id="b2" style="top:1269px;font-size:17.500px">Problems</span>
<svg style="left:277px;top:1274px" width="17" height="16" viewBox="0 0 17 16"><rect x="0" y=".6" width="16.800" height="14.800" fill="#afb1b3"/><path d="M3 4L7 7.200L3 10.400" fill="none" stroke="#3c3f41" stroke-width="1.600"/><rect x="8" y="10.600" width="5.400" height="1.600" fill="#3c3f41"/></svg>
<span class="t" id="b3" style="top:1269px;font-size:17.500px">Terminal</span>
<svg style="left:402px;top:1273px" width="19" height="19" viewBox="0 0 19 19"><path d="M9.500 .5L18.600 5.200L9.500 10L.4 5.200Z" fill="#afb1b3"/><path d="M1.500 8.800L9.500 13L17.500 8.800M1.500 12.800L9.500 17L17.500 12.800" fill="none" stroke="#afb1b3" stroke-width="1.800"/></svg>
<span class="t" id="b4" style="top:1269px;font-size:17.500px">Python Packages</span>
<svg style="left:597px;top:1274px" width="17" height="17" viewBox="0 0 24 24">
  <path d="M11.9 .2C8 .2 6.2 1 6.2 3.2V6h5.900v.8H3.200C1 6.800.1 9 .1 12s.9 5.200 3.100 5.200h2.600v-3.100c0-2.200 1.200-3.300 3.300-3.300h5.800c1.900 0 3-1.100 3-3V3.200c0-2.200-1.800-3-6-3zM8.400 2.100a1.100 1.100 0 1 1 0 2.200 1.100 1.100 0 0 1 0-2.200z" fill="#afb1b3"/>
  <path transform="rotate(180 12 12)" d="M11.9 .2C8 .2 6.200 1 6.200 3.200V6h5.900v.8H3.200C1 6.800.1 9 .1 12s.9 5.200 3.100 5.200h2.600v-3.100c0-2.200 1.200-3.300 3.300-3.300h5.800c1.900 0 3-1.100 3-3V3.200c0-2.200-1.800-3-6-3zM8.400 2.100a1.100 1.100 0 1 1 0 2.200 1.100 1.100 0 0 1 0-2.200z" fill="#afb1b3"/>
</svg>
<span class="t" id="b5" style="top:1269px;font-size:17.500px">Python Console</span>
<svg style="left:2092px;top:1273px" width="20" height="20" viewBox="0 0 20 20" fill="none" stroke="#afb1b3" stroke-width="2"><path d="M18.600 18.600V9.800A8.800 8.800 0 1 0 9.800 18.600Z"/></svg>
<span class="t" id="b6" style="top:1269px;font-size:17.500px">Event Log</span>

<!-- ===== status bar ===== -->
<svg style="left:8px;top:1305px" width="20" height="19" viewBox="0 0 20 19" fill="none" stroke="#b6b8ba" stroke-width="1.800"><rect x="4.900" y=".8" width="13.300" height="13.200"/><path d="M1.700 3V17.200H15.900" stroke-width="1.600"/></svg>
<span class="t" id="s1" style="top:1298px">IDE Eval Reset: It has been a long time since the last reset!Would you like to reset it again? // Eval Reset (4 minutes ago)</span>
<span class="t" id="s2" style="top:1298px">17:1</span>
<span class="t" id="s3" style="top:1298px">CRLF</span>
<span class="t" id="s4" style="top:1298px">UTF-8</span>
<span class="t" id="s5" style="top:1298px">4 spaces</span>
<span class="t" id="s6" style="top:1298px">Python 3.10 (pythonProject)</span>
<svg style="left:2202px;top:1305px" width="19" height="18" viewBox="0 0 19 18"><rect x="5.900" y="7.600" width="12.100" height="9.300" fill="#afb1b3"/><path d="M9.500 7.800V4.650a3.650 3.650 0 0 0-7.300 0V7.600" fill="none" stroke="#afb1b3" stroke-width="2.300"/></svg>

</body>
</html>
